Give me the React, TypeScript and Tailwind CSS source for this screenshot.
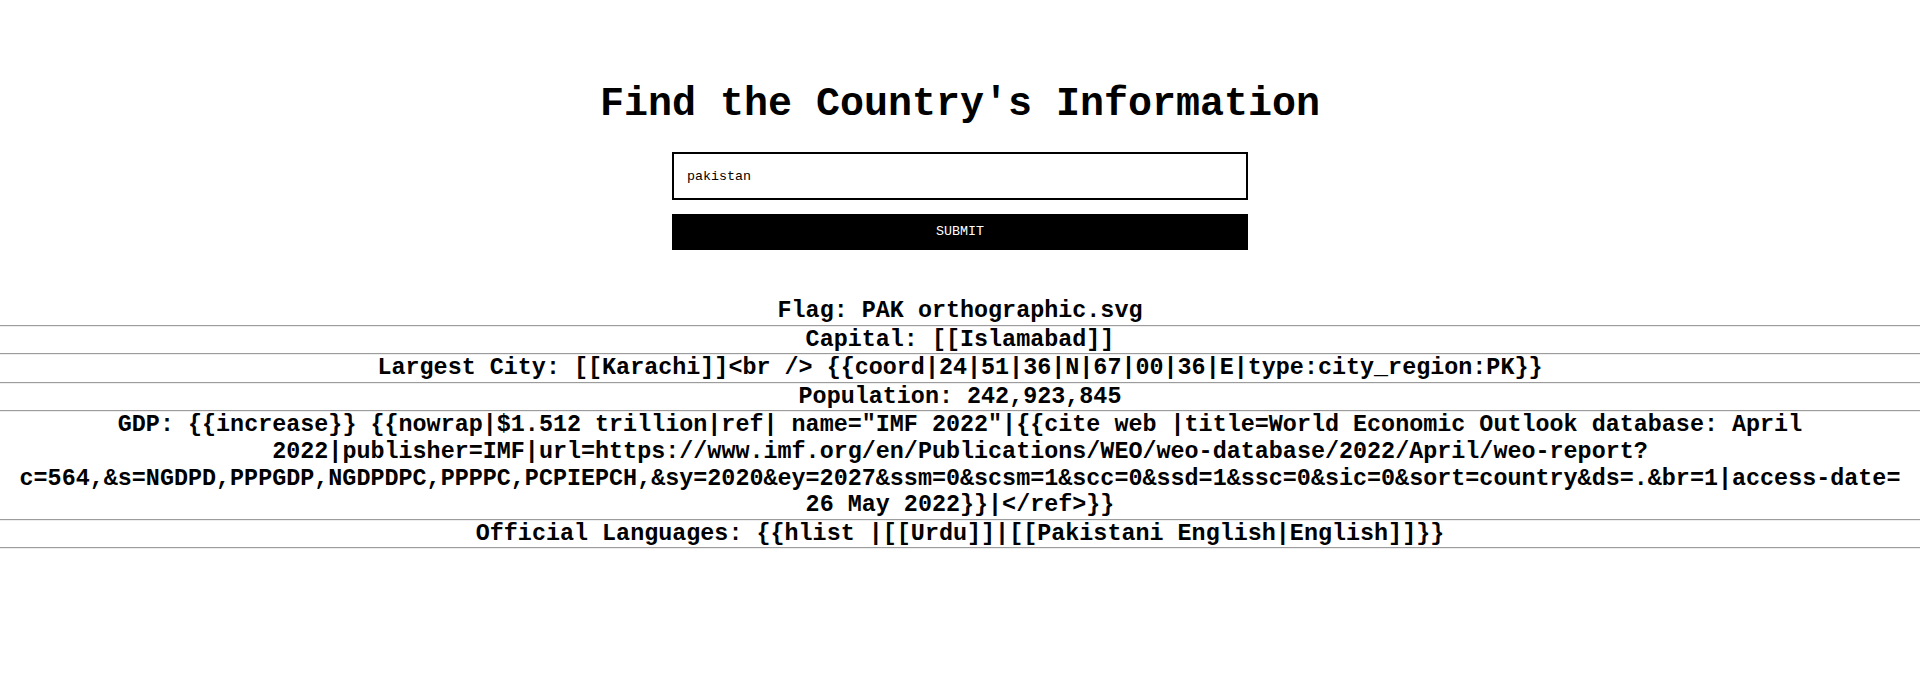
import React from "react";

const rows: string[] = [
  "Flag: PAK orthographic.svg",
  "Capital: [[Islamabad]]",
  "Largest City: [[Karachi]]<br /> {{coord|24|51|36|N|67|00|36|E|type:city_region:PK}}",
  "Population: 242,923,845",
  'GDP: {{increase}} {{nowrap|$1.512 trillion|ref| name="IMF 2022"|{{cite web |title=World Economic Outlook database: April 2022|publisher=IMF|url=https://www.imf.org/en/Publications/WEO/weo-database/2022/April/weo-report?c=564,&s=NGDPD,PPPGDP,NGDPDPC,PPPPC,PCPIEPCH,&sy=2020&ey=2027&ssm=0&scsm=1&scc=0&ssd=1&ssc=0&sic=0&sort=country&ds=.&br=1|access-date= 26 May 2022}}|</ref>}}',
  "Official Languages: {{hlist |[[Urdu]]|[[Pakistani English|English]]}}",
];

export default function App() {
  return (
    <div className="min-h-[695px] w-full bg-white text-black font-['Liberation_Mono','Courier_New',monospace]">
      <h1 className="pt-[82px] text-center text-[40px] leading-[45px] font-bold">
        Find the Country's Information
      </h1>
      <form
        className="mt-[25px] flex flex-col items-center"
        onSubmit={(e) => e.preventDefault()}
      >
        <input
          type="text"
          defaultValue="pakistan"
          className="box-border h-[48px] w-[576px] border-2 border-black bg-white px-[13px] text-[13.33px] text-black outline-none font-['Liberation_Mono','Courier_New',monospace]"
        />
        <button
          type="submit"
          className="mt-[14px] h-[36px] w-[576px] bg-black text-[13.33px] text-white font-['Liberation_Mono','Courier_New',monospace]"
        >
          SUBMIT
        </button>
      </form>
      <div className="mt-[48px] w-full">
        {rows.map((r, i) => (
          <div key={i}>
            <p className="text-center text-[23.4px] leading-[26.6px] font-bold">{r}</p>
            <div className="h-0 w-full border-t border-b border-t-[#9c9c9c] border-b-[#eeeeee]" />
          </div>
        ))}
      </div>
    </div>
  );
}
